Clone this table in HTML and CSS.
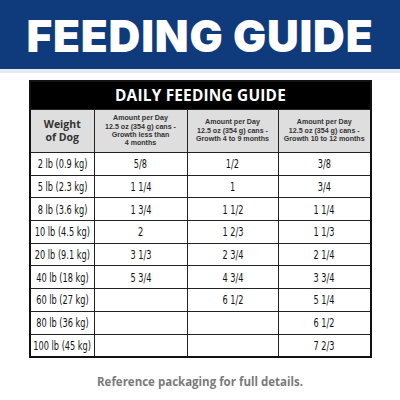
FILE: index.html
```html
<!doctype html>
<html lang="en">
<head>
    <meta charset="UTF-8">
    <title>Feeding Guide</title>
    <link rel="stylesheet" href="styles.css">
</head>
<body>
<div class="banner">
    <h1>FEEDING GUIDE</h1>
</div>
<div class="wrap">
    <table class="guide">
        <colgroup>
            <col class="c1"><col class="c2"><col class="c3"><col>
        </colgroup>
        <tr>
            <th class="title" colspan="4">DAILY FEEDING GUIDE</th>
        </tr>
        <tr class="head">
            <th class="weight">Weight<br>of Dog</th>
            <th>Amount per Day<br>12.5 oz (354 g) cans -<br>Growth less than<br>4 months</th>
            <th>Amount per Day<br>12.5 oz (354 g) cans -<br>Growth 4 to 9 months</th>
            <th>Amount per Day<br>12.5 oz (354 g) cans -<br>Growth 10 to 12 months</th>
        </tr>
        <tr><td><span>2 lb (0.9 kg)</span></td><td><span>5/8</span></td><td><span>1/2</span></td><td><span>3/8</span></td></tr>
        <tr><td><span>5 lb (2.3 kg)</span></td><td><span>1 1/4</span></td><td><span>1</span></td><td><span>3/4</span></td></tr>
        <tr><td><span>8 lb (3.6 kg)</span></td><td><span>1 3/4</span></td><td><span>1 1/2</span></td><td><span>1 1/4</span></td></tr>
        <tr><td><span>10 lb (4.5 kg)</span></td><td><span>2</span></td><td><span>1 2/3</span></td><td><span>1 1/3</span></td></tr>
        <tr><td><span>20 lb (9.1 kg)</span></td><td><span>3 1/3</span></td><td><span>2 3/4</span></td><td><span>2 1/4</span></td></tr>
        <tr><td><span>40 lb (18 kg)</span></td><td><span>5 3/4</span></td><td><span>4 3/4</span></td><td><span>3 3/4</span></td></tr>
        <tr><td><span>60 lb (27 kg)</span></td><td></td><td><span>6 1/2</span></td><td><span>5 1/4</span></td></tr>
        <tr><td><span>80 lb (36 kg)</span></td><td></td><td></td><td><span>6 1/2</span></td></tr>
        <tr><td><span>100 lb (45 kg)</span></td><td></td><td></td><td><span>7 2/3</span></td></tr>
    </table>
</div>
<p class="note">Reference packaging for full details.</p>
</body>
</html>
```
FILE: styles.css
```css
html,body{
    margin:0px;
    padding:0px;
    background:#fff;
}
.banner{
    height:69px;
    background:#0f3a7b;
    display:flex;
    align-items:center;
    justify-content:center;
    border-bottom:4px solid #e6ecf4;
}
.banner h1{
    margin:0px;
    color:#fff;
    font-family:"Inter",sans-serif;
    font-weight:900;
    font-size:44px;
    letter-spacing:0.8px;
    padding-top:3px;
}
.wrap{
    padding:7px 28px 0 29px;
}
.guide{
    width:343px;
    border-collapse:collapse;
    border:2px solid #111;
    table-layout:fixed;
}
.guide .c1{ width:64px; }
.guide .c2{ width:93px; }
.guide .c3{ width:91px; }
.guide th,.guide td{
    border:1px solid #222;
    text-align:center;
    padding:0px;
}
.guide .title{
    background:#000;
    color:#fff;
    font-family:"Open Sans",sans-serif;
    font-weight:700;
    font-size:15.4px;
    height:27px;
    letter-spacing:0.2px;
}
.guide .head th{
    background:#dedede;
    color:#333;
    font-family:"Liberation Sans",sans-serif;
    font-weight:700;
    font-size:7.1px;
    line-height:8.4px;
    height:42px;
    white-space:nowrap;
}
.guide .head .weight{
    font-family:"Open Sans",sans-serif;
    font-size:10.5px;
    line-height:13px;
}
.guide td{
    height:21.7px;
    font-family:"DejaVu Sans Condensed","DejaVu Sans",sans-serif;
    font-size:13px;
    color:#111;
}
.guide td span{
    display:inline-block;
    transform:scaleX(0.7);
    white-space:nowrap;
    margin:0 -24px;
}
.note{
    margin:16px 0 0 0;
    text-align:center;
    font-family:"Open Sans",sans-serif;
    font-weight:700;
    font-size:11.5px;
    color:#7a7a7a;
}
```
